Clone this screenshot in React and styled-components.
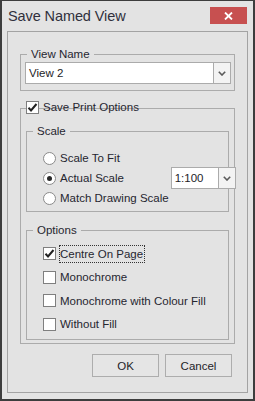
import React from 'react';
import styled, { createGlobalStyle } from 'styled-components';

const font = `"Liberation Sans", Arial, sans-serif`;

const GlobalStyle = createGlobalStyle`
  html, body {
    margin: 0;
    padding: 0;
    background: #e3e3e3;
  }
  * {
    box-sizing: border-box;
  }
`;

const Window = styled.div`
  width: 255px;
  height: 401px;
  display: flex;
  flex-direction: column;
  background: #e3e3e3;
  border: 2px solid #3d3d3d;
  border-top-width: 1px;
  font-family: ${font};
  font-size: 11.5px;
  color: #262630;
`;

const TitleBar = styled.div`
  height: 30px;
  flex: none;
  display: flex;
  justify-content: space-between;
  align-items: flex-start;
  padding: 0 6px 0 6px;
`;

const Title = styled.div`
  margin-top: 7px;
  font-size: 14.5px;
  line-height: 16px;
  letter-spacing: -0.1px;
  color: #30303c;
`;

const CloseButton = styled.div`
  margin-top: 6px;
  width: 37px;
  height: 17px;
  background: #c75050;
  display: flex;
  align-items: center;
  justify-content: center;
`;

const Panel = styled.div`
  flex: 1;
  margin: 0 5px 6px 5px;
  border: 1px solid #a3a3a3;
  padding: 22px 12px 0 12px;
  display: flex;
  flex-direction: column;
`;

const Group = styled.div`
  position: relative;
  border: 1px solid #ababab;
  padding: ${(p) => p.$pad};
  margin-top: ${(p) => p.$top || 0}px;
`;

const GroupLabel = styled.div`
  position: absolute;
  top: ${(p) => p.$y || -8}px;
  left: ${(p) => p.$x || 6}px;
  padding: 0 4px;
  line-height: 14px;
  background: ${(p) => (p.$clear ? 'transparent' : '#e3e3e3')};
  display: flex;
  align-items: center;
  gap: 4px;
`;

const Combo = styled.div`
  height: 22px;
  width: ${(p) => (p.$width ? `${p.$width}px` : 'auto')};
  display: flex;
  background: #fff;
  border: 1px solid #ababab;
`;

const ComboText = styled.div`
  flex: 1;
  padding-left: 3px;
  line-height: 20px;
  color: #1e1e28;
`;

const ComboButton = styled.div`
  width: 17px;
  border-left: 1px solid #ababab;
  background: #f3f3f3;
  display: flex;
  align-items: center;
  justify-content: center;
`;

const ScaleGrid = styled.div`
  display: grid;
  grid-template-columns: 1fr 65px;
  grid-auto-rows: 20px;
  align-items: center;
`;

const Row = styled.div`
  display: flex;
  align-items: center;
  gap: 3px;
`;

const OptionList = styled.div`
  display: grid;
  grid-auto-rows: 23.5px;
  align-items: center;
`;

const Radio = styled.div`
  width: 13px;
  height: 13px;
  border-radius: 50%;
  background: #fff;
  border: 1px solid #8a8a8a;
  display: flex;
  align-items: center;
  justify-content: center;
  &::after {
    content: '';
    display: ${(p) => (p.$checked ? 'block' : 'none')};
    width: 5px;
    height: 5px;
    border-radius: 50%;
    background: #2a2a2a;
  }
`;

const Box = styled.div`
  width: 13px;
  height: 13px;
  flex: none;
  background: #fff;
  border: 1px solid #7f7f7f;
  display: flex;
  align-items: center;
  justify-content: center;
`;

const Caption = styled.span`
  padding: 0 1px 0 0;
  line-height: 16px;
  border: 1px dotted ${(p) => (p.$focus ? '#333' : 'transparent')};
  white-space: nowrap;
`;

const ButtonRow = styled.div`
  display: flex;
  justify-content: flex-end;
  gap: 6px;
  margin-top: 10px;
  padding-right: 3px;
`;

const DialogButton = styled.div`
  width: 67px;
  height: 23px;
  border: 1px solid #adadad;
  background: #e5e5e5;
  display: flex;
  align-items: center;
  justify-content: center;
  color: #1e1e28;
`;

const Chevron = () => (
  <svg width="8" height="5" viewBox="0 0 8 5">
    <polyline points="0.8,0.8 4,4 7.2,0.8" fill="none" stroke="#5a5a5a" strokeWidth="1.6" />
  </svg>
);

const Check = () => (
  <svg width="11" height="11" viewBox="0 0 11 11">
    <polyline points="1.5,5.8 4,8.4 9.5,2" fill="none" stroke="#222" strokeWidth="2" />
  </svg>
);

const CheckBox = ({ checked }) => <Box>{checked && <Check />}</Box>;

const options = [
  { label: 'Centre On Page', checked: true, focus: true },
  { label: 'Monochrome' },
  { label: 'Monochrome with Colour Fill' },
  { label: 'Without Fill' },
];

export default function App() {
  return (
    <>
      <GlobalStyle />
      <Window>
        <TitleBar>
          <Title>Save Named View</Title>
          <CloseButton>
            <svg width="9" height="8" viewBox="0 0 9 8">
              <path d="M1 0.5 L8 7.5 M8 0.5 L1 7.5" stroke="#fff" strokeWidth="1.8" />
            </svg>
          </CloseButton>
        </TitleBar>
        <Panel>
          <Group $pad="7px 3px 6px 4px">
            <GroupLabel>View Name</GroupLabel>
            <Combo>
              <ComboText>View 2</ComboText>
              <ComboButton>
                <Chevron />
              </ComboButton>
            </Combo>
          </Group>

          <Group $pad="22px 5px 3px 5px" $top={17}>
            <GroupLabel $clear $x={1} $y={-9}>
              <CheckBox checked />
              <span>Save Print Options</span>
            </GroupLabel>

            <Group $pad="16px 15px 3px 16px">
              <GroupLabel>Scale</GroupLabel>
              <ScaleGrid>
                <Row>
                  <Radio />
                  <Caption>Scale To Fit</Caption>
                </Row>
                <span />
                <Row>
                  <Radio $checked />
                  <Caption>Actual Scale</Caption>
                </Row>
                <Combo $width={65}>
                  <ComboText>1:100</ComboText>
                  <ComboButton>
                    <Chevron />
                  </ComboButton>
                </Combo>
                <Row>
                  <Radio />
                  <Caption>Match Drawing Scale</Caption>
                </Row>
              </ScaleGrid>
            </Group>

            <Group $pad="11px 10px 3px 16px" $top={18}>
              <GroupLabel>Options</GroupLabel>
              <OptionList>
                {options.map((o) => (
                  <Row key={o.label}>
                    <CheckBox checked={o.checked} />
                    <Caption $focus={o.focus}>{o.label}</Caption>
                  </Row>
                ))}
              </OptionList>
            </Group>
          </Group>

          <ButtonRow>
            <DialogButton>OK</DialogButton>
            <DialogButton>Cancel</DialogButton>
          </ButtonRow>
        </Panel>
      </Window>
    </>
  );
}
